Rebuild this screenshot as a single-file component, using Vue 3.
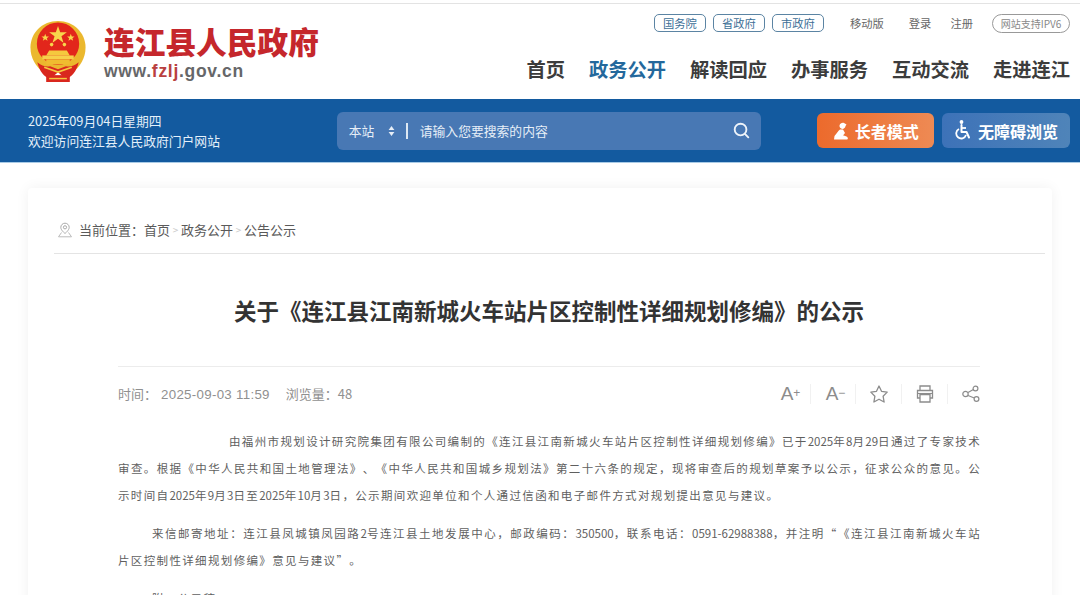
<template>
  <div class="page">
    <header class="site-header">
      <div class="brand">
        <svg class="emblem" viewBox="0 0 58 64">
          <path d="M29 1C13 1 1 13 1 28c0 11 6 20 13 25h30c7-5 13-14 13-25C57 13 45 1 29 1z" fill="#ebb82e" />
          <circle cx="29" cy="24" r="21.500" fill="#e2261b" />
          <polygon points="29,6 31.200,12.500 38,12.500 32.500,16.500 34.600,23 29,19 23.400,23 25.500,16.500 20,12.500 26.800,12.500" fill="#f8d64c" />
          <polygon points="16,14 17,16.800 19.800,16.800 17.600,18.500 18.400,21.200 16,19.600 13.600,21.200 14.400,18.500 12.200,16.800 15,16.800" fill="#f8d64c" />
          <polygon points="42,14 43,16.800 45.800,16.800 43.600,18.500 44.400,21.200 42,19.600 39.600,21.200 40.400,18.500 38.200,16.800 41,16.800" fill="#f8d64c" />
          <circle cx="22.500" cy="25" r="1.800" fill="#f8d64c" />
          <circle cx="35.500" cy="25" r="1.800" fill="#f8d64c" />
          <path d="M17 36l3-5h18l3 5z" fill="#f5c83e" />
          <path d="M13 36h32v4H13z" fill="#f7d04a" />
          <path d="M17 40h24v5H17z" fill="#f0bc30" />
          <path d="M8 43c2 9 7 15 13 17l8-7 8 7c6-2 11-8 13-17-5 4-9 5-13 4l-8 3-8-3c-4 1-8 0-13-4z" fill="#d9271e" />
          <path d="M17 56h24v7H17z" fill="#d9271e" />
          <path d="M20 59.500h18" stroke="#f5c83e" stroke-width="1.500" />
          <path d="M15 48l14 5 14-5" stroke="#f5c83e" stroke-width="1.800" fill="none" />
        </svg>
        <div class="brand-text">
          <div class="brand-name">连江县人民政府</div>
          <div class="brand-url">www.<span class="url-red">fzlj</span>.gov.cn</div>
        </div>
      </div>
      <div class="header-right">
        <div class="top-links">
          <a v-for="t in govLinks" :key="t" class="gov-link">{{ t }}</a>
          <a class="plain-link first">移动版</a>
          <a class="plain-link login">登录</a>
          <a class="plain-link">注册</a>
          <a class="ipv6">网站支持IPV6</a>
        </div>
        <nav class="main-nav">
          <a v-for="n in navItems" :key="n" :class="{ active: n === '政务公开' }">{{ n }}</a>
        </nav>
      </div>
    </header>

    <div class="blue-bar">
      <div class="date-info">
        <div>2025年09月04日星期四</div>
        <div>欢迎访问连江县人民政府门户网站</div>
      </div>
      <div class="search-box">
        <span class="scope">本站</span>
        <svg class="updown" viewBox="0 0 8 12">
          <path d="M4 0l3.500 4.800h-7zM4 12L.5 7.200h7z" fill="#e6eef7" />
        </svg>
        <span class="divider"></span>
        <span class="placeholder">请输入您要搜索的内容</span>
        <svg class="search-icon" viewBox="0 0 18 18">
          <circle cx="8" cy="8" r="6.200" fill="none" stroke="#eef4fa" stroke-width="2" />
          <path d="M12.600 12.600l3.600 3.600" stroke="#eef4fa" stroke-width="2" stroke-linecap="round" />
        </svg>
      </div>
      <div class="mode-btn elder">
        <svg viewBox="0 0 16 18" class="mode-icon">
          <path d="M6.500 3.500C7 1.500 9 .5 11 1l2.500 1.500-1 1.500c-.2 2-2 3.200-3.800 2.800-1.400-.3-2.400-1.800-2.200-3.300z" fill="#fff" />
          <path d="M7 7.500c-2 1.500-3.500 4.500-5.500 6.500L1 17.500h13c1 0 1.200-1.500.2-2.500-1.500-1-3-1.500-4.200-1.500l2-2.500-2-3.500z" fill="#fff" />
        </svg>
        长者模式
      </div>
      <div class="mode-btn access">
        <svg viewBox="0 0 18 20" class="mode-icon wheel">
          <circle cx="7.500" cy="2" r="1.900" fill="#fff" />
          <path d="M7.500 5v7h5l2.500 5.500" fill="none" stroke="#fff" stroke-width="2" stroke-linejoin="round" stroke-linecap="round" />
          <path d="M7.500 8h4.500" stroke="#fff" stroke-width="1.800" />
          <path d="M5 9a5 5 0 1 0 7 6" fill="none" stroke="#fff" stroke-width="1.800" />
        </svg>
        无障碍浏览
      </div>
    </div>

    <main class="card">
      <div class="crumbs">
        <svg class="pin" viewBox="0 0 16 16">
          <path d="M8 1.200a4.200 4.200 0 0 0-4.200 4.200C3.800 8.200 8 11.500 8 11.500s4.200-3.300 4.200-6.100A4.200 4.200 0 0 0 8 1.200z" fill="none" stroke="#aaa" />
          <circle cx="8" cy="5.300" r="1.600" fill="none" stroke="#aaa" />
          <path d="M4.500 10.500L1.500 14.800h13l-3-4.300" fill="none" stroke="#bbb" />
        </svg>
        <span class="crumb-label">当前位置：</span>
        <span>首页</span><span class="sep">&gt;</span>
        <span>政务公开</span><span class="sep">&gt;</span>
        <span>公告公示</span>
      </div>

      <h1 class="title">关于《连江县江南新城火车站片区控制性详细规划修编》的公示</h1>

      <div class="meta-row">
        <div class="meta">
          <span>时间：</span><span class="time">2025-09-03 11:59</span><span class="views">浏览量：48</span>
        </div>
        <div class="tools">
          <span class="tool font-tool">A<sup>+</sup></span>
          <span class="tool font-tool">A<sup>−</sup></span>
          <span class="tool">
            <svg viewBox="0 0 20 20" width="20" height="20">
              <path d="M10 2l2.500 5.300 5.700.8-4.100 4.100 1 5.800-5.100-2.800-5.100 2.800 1-5.800L1.800 8.100l5.700-.8z" fill="none" stroke="#8c8c8c" stroke-width="1.300" stroke-linejoin="round" />
            </svg>
          </span>
          <span class="tool">
            <svg viewBox="0 0 20 20" width="20" height="20">
              <path d="M5 6V2h10v4M5 14H2.500V6.500h15V14H15" fill="none" stroke="#8c8c8c" stroke-width="1.300" />
              <path d="M5 10.500h10v7.500H5z" fill="none" stroke="#8c8c8c" stroke-width="1.300" />
              <path d="M3 9.500h14" stroke="#8c8c8c" stroke-width="1.100" />
            </svg>
          </span>
          <span class="tool last">
            <svg viewBox="0 0 20 20" width="20" height="20">
              <circle cx="4.500" cy="10" r="2.700" fill="none" stroke="#8c8c8c" stroke-width="1.200" />
              <circle cx="14.500" cy="4.500" r="2.400" fill="none" stroke="#8c8c8c" stroke-width="1.200" />
              <circle cx="15.500" cy="15" r="2.400" fill="none" stroke="#8c8c8c" stroke-width="1.200" />
              <path d="M7 8.600l5.400-3M7 11.500l6.300 2.500" stroke="#8c8c8c" stroke-width="1.200" />
            </svg>
          </span>
        </div>
      </div>

      <article class="content">
        <p class="para-first">由福州市规划设计研究院集团有限公司编制的《连江县江南新城火车站片区控制性详细规划修编》已于<span class="num">2025</span>年<span class="num">8</span>月<span class="num">29</span>日通过了专家技术审查。根据《中华人民共和国土地管理法》、《中华人民共和国城乡规划法》第二十六条的规定，现将审查后的规划草案予以公示，征求公众的意见。公示时间自<span class="num">2025</span>年<span class="num">9</span>月<span class="num">3</span>日至<span class="num">2025</span>年<span class="num">10</span>月<span class="num">3</span>日，公示期间欢迎单位和个人通过信函和电子邮件方式对规划提出意见与建议。</p>
        <p class="para">来信邮寄地址：连江县凤城镇凤园路<span class="num">2</span>号连江县土地发展中心，邮政编码：<span class="num">350500</span>，联系电话：<span class="num">0591-62988388</span>，并注明“《连江县江南新城火车站片区控制性详细规划修编》意见与建议”。</p>
        <p class="para">附：公示稿</p>
      </article>
    </main>
  </div>
</template>

<script setup>
const govLinks = ["国务院", "省政府", "市政府"];
const navItems = ["首页", "政务公开", "解读回应", "办事服务", "互动交流", "走进连江"];
</script>

<style scoped>
.page {
  width: 1080px;
  height: 595px;
  overflow: hidden;
  background: #fff;
  font-family: "Noto Sans CJK SC", "Liberation Sans", sans-serif;
  color: #666;
}

/* Haut de page */
.site-header {
  height: 95px;
  margin-top: 3px;
  border-top: 1px solid #e3e3e3;
  display: flex;
  justify-content: space-between;
  padding: 0 10px 0 29px;
}

.brand {
  display: flex;
  align-items: flex-start;
  padding-top: 16px;
  gap: 17px;
}

.emblem {
  width: 58px;
  height: 63px;
}

.brand-name {
  font-size: 30.700px;
  font-weight: 900;
  line-height: 36px;
  margin-top: 3px;
  color: #c5272c;
}

.brand-url {
  font-family: "Liberation Sans", sans-serif;
  font-size: 17.500px;
  font-weight: 700;
  letter-spacing: 0.7px;
  line-height: 22px;
  margin-top: 1px;
  color: #666769;
}

.url-red {
  color: #b9403f;
}

.header-right {
  display: flex;
  flex-direction: column;
  align-items: flex-end;
}

.top-links {
  display: flex;
  align-items: center;
  height: 22px;
  margin-top: 8px;
  font-size: 11.300px;
}

.gov-link {
  width: 52px;
  height: 18px;
  line-height: 16px;
  box-sizing: border-box;
  margin-right: 7px;
  text-align: center;
  border: 1px solid #5b84a3;
  border-radius: 5px;
  color: #3d6f97;
}

.plain-link {
  color: #666;
  margin-right: 19px;
}

.plain-link.first {
  margin-left: 19px;
  margin-right: 25px;
}

.ipv6 {
  width: 78px;
  height: 19px;
  line-height: 17px;
  box-sizing: border-box;
  text-align: center;
  font-size: 10px;
  color: #888;
  border: 1px solid #999;
  border-radius: 10px;
}

.main-nav {
  display: flex;
  gap: 24px;
  margin-top: 21px;
  font-size: 19.250px;
  font-weight: 700;
  line-height: 28px;
  color: #3c3c3c;
}

.main-nav .active {
  color: #24689c;
}

/* Barre bleue */
.blue-bar {
  height: 64px;
  box-sizing: border-box;
  display: flex;
  align-items: center;
  padding: 0 10px 0 28px;
  background: #135a9f;
  border-bottom: 1px solid #a9cbe6;
}

.date-info {
  width: 309px;
  font-size: 12.800px;
  line-height: 20px;
  color: #e4f0fa;
}

.search-box {
  width: 425px;
  height: 38px;
  display: flex;
  align-items: center;
  padding: 0 11px 0 12px;
  box-sizing: border-box;
  background: #4878b4;
  border-radius: 6px;
  font-size: 12.800px;
  color: #e6eef7;
}

.updown {
  width: 7px;
  height: 10px;
  margin-left: 14px;
}

.divider {
  width: 1.500px;
  height: 16px;
  margin: 0 12px 0 11px;
  background: #dce8f3;
}

.placeholder {
  flex: 1;
}

.search-icon {
  width: 17px;
  height: 17px;
}

.mode-btn {
  display: flex;
  align-items: center;
  justify-content: center;
  gap: 6px;
  height: 35px;
  border-radius: 6px;
  font-size: 16px;
  font-weight: 700;
  color: #fff;
}

.elder {
  width: 117px;
  margin-left: 56px;
  background: linear-gradient(90deg, #ec6a2c, #ee8a54);
}

.access {
  width: 128px;
  margin-left: 8px;
  background: linear-gradient(90deg, #3d72b8, #4f84b9);
}

.mode-icon {
  width: 16px;
  height: 18px;
}

.mode-icon.wheel {
  width: 18px;
  height: 20px;
  margin-top: -2px;
}

/* Carte principale */
.card {
  margin: 25px 28px 0;
  height: 420px;
  box-sizing: border-box;
  padding: 0 7px 0 26px;
  border-radius: 4px;
  box-shadow: 0 0 14px rgba(0, 0, 0, 0.06);
}

.crumbs {
  height: 66px;
  display: flex;
  align-items: center;
  padding-left: 3px;
  padding-top: 18px;
  box-sizing: border-box;
  border-bottom: 1px solid #e4e4e4;
  font-size: 13px;
  color: #5a5a5a;
}

.pin {
  width: 16px;
  height: 16px;
  margin-right: 6px;
}

.sep {
  width: 11px;
  text-align: center;
  font-size: 10px;
  color: #c9c9c9;
}

.title {
  margin: 0 0 0 64px;
  padding: 41px 0 0;
  width: 862px;
  height: 113px;
  box-sizing: border-box;
  text-align: center;
  font-size: 22.500px;
  font-weight: 700;
  line-height: 30px;
  color: #333;
  border-bottom: 1px solid #ececec;
}

.meta-row {
  display: flex;
  justify-content: space-between;
  align-items: center;
  width: 862px;
  margin-left: 64px;
  height: 52px;
}

.meta {
  font-size: 13px;
  color: #909090;
}

.time {
  margin-left: 4px;
  margin-right: 16px;
  font-family: "Liberation Sans", sans-serif;
  font-size: 13.300px;
  letter-spacing: 0.3px;
}

.tools {
  display: flex;
  align-items: center;
  margin: 2px -13px 0 0;
}

.tool {
  width: 45px;
  height: 20px;
  display: flex;
  align-items: center;
  justify-content: center;
  border-right: 1px solid #f1f1f1;
  color: #8c8c8c;
}

.tool.last {
  border-right: none;
}

.font-tool {
  font-family: "Liberation Sans", sans-serif;
  font-size: 19px;
  padding-left: 5px;
  box-sizing: border-box;
}

.font-tool sup {
  font-size: 12px;
  line-height: 0;
  position: relative;
  top: -1px;
}

.content {
  width: 863px;
  margin-left: 64px;
  padding-top: 9px;
  font-size: 11.500px;
  letter-spacing: 1.350px;
  line-height: 27px;
  color: #5f5f5f;
  text-spacing-trim: space-all;
}

.content p {
  margin: 0 0 11px;
  text-align: justify;
}

.num {
  letter-spacing: 0;
}

.para-first {
  text-indent: 111px;
}

.para {
  text-indent: 34px;
}
</style>

<style>
html,
body {
  margin: 0;
  overflow: hidden;
}
</style>
